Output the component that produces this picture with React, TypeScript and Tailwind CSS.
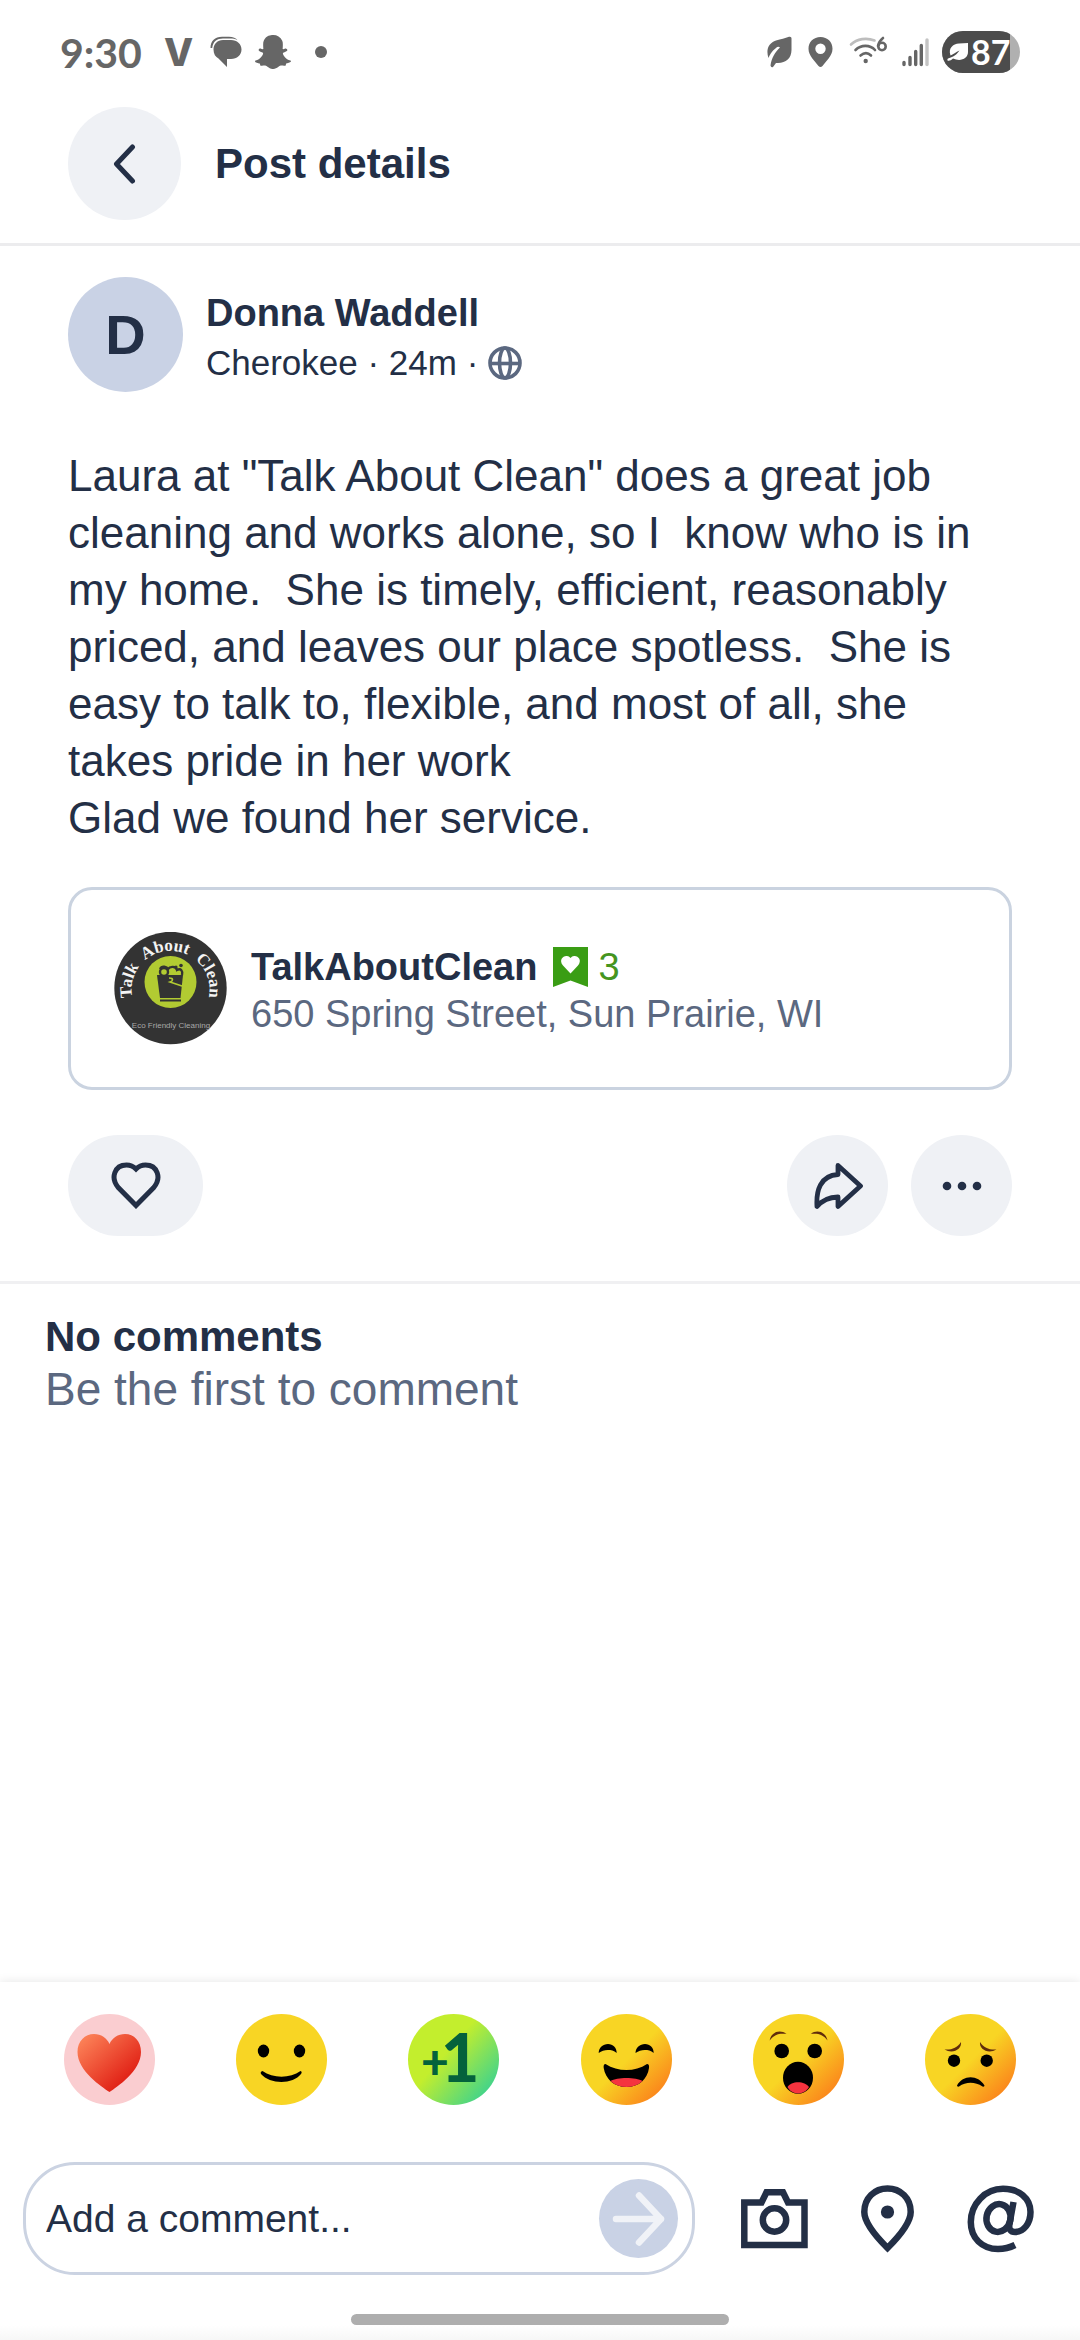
import type { ReactNode } from "react";
import { FaSnapchatGhost } from "react-icons/fa";

const face = "h-[91px] w-[91px]";

function StatusBar() {
  return (
    <div className="flex h-[104px] items-center justify-between px-[60px] text-[#666666]">
      <div className="flex items-center">
        <span className="font-['Lato',sans-serif] text-[41px] font-bold leading-none">9:30</span>
        <span className="ml-[22px] font-['Inter',sans-serif] text-[38px] font-extrabold leading-none">V</span>
        <svg viewBox="0 0 32 32" className="ml-[17px] h-8 w-8" aria-hidden="true">
          <path d="M.5 12C.5 5 5 .8 12 .8H19C23 .8 26 2 27.500 4.200C25 3 23 2.600 20 2.600H13C7 2.600 3 5.500 2.200 12Z" fill="currentColor" />
          <path d="M13 4H21C27 4 31.500 8 31.500 13.500S27 23 21 23H17V31L8.500 22.500C5.500 21 3.500 18 3.500 13.500C3.500 8 7.500 4 13 4Z" fill="currentColor" />
        </svg>
        <FaSnapchatGhost className="ml-[13px] h-[36px] w-[36px]" aria-hidden="true" />
        <span className="ml-6 h-3 w-3 rounded-full bg-[#666666]" />
      </div>
      <div className="flex items-center">
        <svg viewBox="0 0 25 32" className="h-8 w-[25px]" aria-hidden="true">
          <path d="M22 .8C23.500 .3 24.500 1 24.500 2.500V14C24.500 22 19 27 11 27H9L6 31Q4 32 3.500 29.500C4.500 22 8 16 13 11.500Q11 10 9 12C4.500 15.500 2.500 19 1.500 22C-1.500 13 2 7 9 4.500C14 3 18 2.500 22 .8Z" fill="currentColor" />
        </svg>
        <svg viewBox="0 0 25 32" className="ml-4 h-8 w-[25px]" aria-hidden="true">
          <path fillRule="evenodd" d="M12.500 1C5.500 1 .5 6 .5 12.700C.5 20 7 25 10.500 30Q12.500 32 14.500 30C18 25 24.500 20 24.500 12.700C24.500 6 19.500 1 12.500 1ZM12.500 7.500A5.200 5.200 0 1 1 12.500 17.900A5.200 5.200 0 1 1 12.500 7.500Z" fill="currentColor" />
        </svg>
        <svg viewBox="0 0 38 32" className="ml-4 h-8 w-[38px]" aria-hidden="true">
          <g fill="none" strokeWidth="2.600" strokeLinecap="round">
            <path d="M2 8.500C8 2.500 18 1.500 25.500 4.500" stroke="#bdbdbd" />
            <path d="M6.500 14C12 8.500 21 8.500 26 14" stroke="currentColor" />
            <path d="M11.500 19.500C15 16.500 19 16.500 22 19.500" stroke="currentColor" />
            <path d="M34 2C31.500 4 29.500 7 29 10" stroke="currentColor" />
            <circle cx="33" cy="10.500" r="3.700" stroke="currentColor" />
          </g>
          <circle cx="16.700" cy="25" r="2.200" fill="currentColor" />
        </svg>
        <svg viewBox="0 0 28 32" className="ml-[14px] h-8 w-7" aria-hidden="true">
          <g stroke="currentColor" strokeWidth="3.400" strokeLinecap="round">
            <path d="M3 26.500V28.500M9 21.500V28.500M14.700 15.500V28.500M20.300 9.500V28.500" />
            <path d="M26 4V28.500" stroke="#c4c4c4" />
          </g>
        </svg>
        <div className="ml-[13px] flex h-[42px] w-[78px] overflow-hidden rounded-full bg-[#b0b0b0]">
          <div className="flex w-[68px] items-center bg-[#4c4c4c] pl-[5px] text-white">
            <svg viewBox="0 0 22 20" className="h-5 w-[22px] shrink-0" aria-hidden="true">
              <path d="M21 1V10C21 16 15 19 9 17.500L6 16.500C4 18.500 2 19 .5 18.500Q0 17 1 16.500C7 15 10 12 12.500 8.500C9 10 6 12.500 3.500 13.500C1 6 6 2 12 1.500C15 1.200 18 1 21 1Z" fill="currentColor" />
            </svg>
            <span className="ml-[2px] font-['Lato',sans-serif] text-[34px] font-bold leading-none">87</span>
          </div>
        </div>
      </div>
    </div>
  );
}

function BusinessLogo() {
  return (
    <svg viewBox="0 0 113 113" className="h-[113px] w-[113px] shrink-0" role="img" aria-label="Talk About Clean, Eco Friendly Cleaning">
      <defs>
        <path id="logo-arc" d="M21 74A39 39 0 1 1 92 74" />
      </defs>
      <circle cx="56.500" cy="56" r="56.200" fill="#333333" />
      <text fill="#f4f4f4" fontFamily="Liberation Serif, serif" fontSize="17" fontWeight="bold">
        <textPath href="#logo-arc" startOffset="50%" textAnchor="middle">
          {"Talk\u00a0\u00a0About\u00a0\u00a0Clean"}
        </textPath>
      </text>
      <circle cx="56.500" cy="50" r="26" fill="#b2cb32" />
      <path d="M43 43H69L66.500 66H46Z" fill="#333333" />
      <path d="M46 68.500H67" stroke="#333333" strokeWidth="2" />
      <g fill="none" stroke="#333333" strokeWidth="2.400">
        <circle cx="50" cy="40" r="4" />
        <path d="M46 37C48 33 53 35 54 37C56 34 62 34 63 38C67 36 69 39 68 43" />
      </g>
      <path d="M55 46C60 46 59 49 56 50L71 55" fill="none" stroke="#b2cb32" strokeWidth="1.600" />
      <circle cx="62" cy="35" r="1.600" fill="#333333" />
      <circle cx="67" cy="33.500" r="1.800" fill="#333333" />
      <text x="57" y="96" textAnchor="middle" fill="#a8a8a8" fontFamily="Liberation Sans, sans-serif" fontSize="8">Eco Friendly Cleaning</text>
    </svg>
  );
}

function FaceBase({ id }: { id: string }) {
  return (
    <>
      <defs>
        <linearGradient id={id} x1="0.200" y1="0.200" x2="0.880" y2="0.880">
          <stop offset="0.450" stopColor="#f8d524" />
          <stop offset="1" stopColor="#fb831b" />
        </linearGradient>
      </defs>
      <circle cx="45.500" cy="45.500" r="45.500" fill={`url(#${id})`} />
    </>
  );
}

const reactions: { label: string; art: ReactNode }[] = [
  {
    label: "Love",
    art: (
      <svg viewBox="0 0 91 91" className={face} aria-hidden="true">
        <defs>
          <linearGradient id="love" x1="0.050" y1="0.150" x2="0.750" y2="0.850">
            <stop offset="0" stopColor="#fb7e55" />
            <stop offset="1" stopColor="#e01f14" />
          </linearGradient>
        </defs>
        <circle cx="45.500" cy="45.500" r="45.500" fill="#facdd0" />
        <path d="M45.500 78C38 73 13.500 57 13.500 38C13.500 27 21 20 30 20C37 20 43 24 45.500 30C48 24 54 20 61 20C70 20 77 27 77 38C77 57 53 73 45.500 78Z" fill="url(#love)" />
      </svg>
    ),
  },
  {
    label: "Smile",
    art: (
      <svg viewBox="0 0 91 91" className={face} aria-hidden="true">
        <circle cx="45.500" cy="45.500" r="45.500" fill="#f8d524" />
        <ellipse cx="27.500" cy="37" rx="5.700" ry="6.400" />
        <ellipse cx="63.500" cy="37" rx="5.700" ry="6.400" />
        <path d="M26.500 57C37 64.500 54 64.500 64.500 57Q66.500 57.500 65 60C57 70.500 34 70.500 25 60Q24 57.500 26.500 57Z" />
      </svg>
    ),
  },
  {
    label: "Plus one",
    art: (
      <svg viewBox="0 0 91 91" className={face} aria-hidden="true">
        <defs>
          <linearGradient id="plus" x1="0.150" y1="0.200" x2="0.900" y2="0.850">
            <stop offset="0.350" stopColor="#c3ee2d" />
            <stop offset="1" stopColor="#3fd38c" />
          </linearGradient>
        </defs>
        <circle cx="45.500" cy="45.500" r="45.500" fill="url(#plus)" />
        <text x="13" y="65" fill="#04623c" fontFamily="Lato, sans-serif" fontWeight="900" fontSize="48">
          +
          <tspan x="33" y="68" fontSize="66">1</tspan>
        </text>
      </svg>
    ),
  },
  {
    label: "Laugh",
    art: (
      <svg viewBox="0 0 91 91" className={face} aria-hidden="true">
        <FaceBase id="laugh" />
        <path d="M17.700 39C17.700 33.500 22 30 27 30S35.700 33.500 35.700 39C33 36.500 30 36 26.700 36S20.500 37 17.700 39Z" />
        <path d="M54.500 39C54.500 33.500 59 30 64 30S72.700 33.500 72.700 39C70 36.500 67 36 63.700 36S57.500 37 54.500 39Z" />
        <path d="M24.500 50C37 58 54 58 66 50Q68.500 50 68 54C66.500 65 58 73 45.500 73S24.500 65 22.700 54Q22.200 50 24.500 50Z" />
        <path d="M29.500 67C36 63 55 63 61.500 67C53 75 38 75 29.500 67Z" fill="#f5333f" />
      </svg>
    ),
  },
  {
    label: "Surprised",
    art: (
      <svg viewBox="0 0 91 91" className={face} aria-hidden="true">
        <FaceBase id="wow" />
        <path d="M16.700 26.500C18 18 27 15 33.500 20C27 19 21.500 20 16.700 26.500Z" fill="#602d0b" />
        <path d="M74.500 26.500C73 18 64 15 57.700 20C64 19 70 20 74.500 26.500Z" fill="#602d0b" />
        <circle cx="28.700" cy="37" r="7.300" />
        <circle cx="61.700" cy="37" r="7.300" />
        <ellipse cx="45" cy="63.700" rx="15" ry="16" />
        <path d="M34.500 73C38 66.500 52 66.500 56 73C51 81.500 39 81.500 34.500 73Z" fill="#f5333f" />
      </svg>
    ),
  },
  {
    label: "Sad",
    art: (
      <svg viewBox="0 0 91 91" className={face} aria-hidden="true">
        <FaceBase id="sad" />
        <path d="M19.500 35.500C27 36 32 34 36 28C37 35 28 40.500 19.500 35.500Z" fill="#602d0b" />
        <path d="M71.500 35.500C64 36 59 34 55 28C54 35 63 40.500 71.500 35.500Z" fill="#602d0b" />
        <circle cx="29" cy="46.700" r="6.200" />
        <circle cx="61.700" cy="46.700" r="6.200" />
        <path d="M32 71.500C38 60.500 53 60.500 59.500 71.500Q59.500 73 57.500 72.500C50 67.500 41 67.500 34 72.500Q32 73 32 71.500Z" />
      </svg>
    ),
  },
];

export default function App() {
  return (
    <div className="flex min-h-screen flex-col bg-white font-['Liberation_Sans',Arial,sans-serif] text-[#232f46]">
      <StatusBar />

      <header className="flex items-center gap-[34px] border-b-[3px] border-[#ececee] px-[68px] pb-[23px] pt-[3px]">
        <button type="button" aria-label="Back" className="flex h-[113px] w-[113px] items-center justify-center rounded-full bg-[#eff1f5]">
          <svg viewBox="0 0 24 40" className="h-10 w-6" fill="none" stroke="currentColor" strokeWidth="5" strokeLinecap="round" strokeLinejoin="round" aria-hidden="true">
            <path d="M19.500 3L3.500 20L19.500 37" />
          </svg>
        </button>
        <h1 className="text-[42px] font-bold leading-[53px]">Post details</h1>
      </header>

      <main>
        <article className="border-b-[3px] border-[#f0f0f2] px-[68px] pb-[45px] pt-[31px]">
          <div className="flex items-start gap-[23px]">
            <div className="flex h-[115px] w-[115px] items-center justify-center rounded-full bg-[#c9d2e5] text-[56px] font-bold leading-none">D</div>
            <div className="pt-[11px]">
              <h2 className="text-[38px] font-bold leading-[50px]">Donna Waddell</h2>
              <p className="flex items-center gap-[10px] text-[35px] leading-[50px]">
                Cherokee · 24m ·
                <svg viewBox="0 0 34 34" className="h-[34px] w-[34px]" fill="none" stroke="#5b6880" strokeWidth="3.600" aria-label="Public" role="img">
                  <circle cx="17" cy="17" r="15" />
                  <ellipse cx="17" cy="17" rx="5.500" ry="15" />
                  <path d="M2 17.500H32" />
                </svg>
              </p>
            </div>
          </div>

          <p className="mt-[55px] whitespace-pre-wrap text-[44px] leading-[57px]">
            {`Laura at "Talk About Clean" does a great job cleaning and works alone, so I  know who is in my home.  She is timely, efficient, reasonably priced, and leaves our place spotless.  She is easy to talk to, flexible, and most of all, she takes pride in her work\nGlad we found her service.`}
          </p>

          <a href="#business" className="mt-[41px] flex items-center gap-6 rounded-[24px] border-[3px] border-[#cad3e0] px-[43px] py-[42px]">
            <BusinessLogo />
            <div className="pt-1">
              <div className="flex items-center text-[38px] leading-[47px]">
                <span className="font-bold">TalkAboutClean</span>
                <svg viewBox="0 0 35 40" className="ml-4 h-10 w-[35px]" aria-hidden="true">
                  <path d="M0 0H35V40L17.500 33.500L0 40Z" fill="#3a9d14" />
                  <path d="M17.500 26.500L10 18.500C5.500 13 10 8.500 14 9Q16 9.200 17.500 11Q19 9.200 21 9C25 8.500 29.500 13 25 18.500Z" fill="#ffffff" />
                </svg>
                <span className="ml-[10px] text-[#45951f]">3</span>
              </div>
              <p className="text-[38px] leading-[47px] text-[#5b6880]">650 Spring Street, Sun Prairie, WI</p>
            </div>
          </a>

          <div className="mt-[45px] flex items-center gap-[23px]">
            <button type="button" aria-label="Like" className="mr-auto flex h-[101px] w-[135px] items-center justify-center rounded-full bg-[#eff1f5]">
              <svg viewBox="0 0 50 47" className="h-[47px] w-[50px]" fill="none" stroke="currentColor" strokeWidth="5" aria-hidden="true">
                <path d="M25 43.500L7.500 25.800C-1 16 3.500 3 15.500 3Q21 3 25 7Q29 3 34.500 3C46.500 3 51 16 42.500 25.800Z" />
              </svg>
            </button>
            <button type="button" aria-label="Share" className="flex h-[101px] w-[101px] items-center justify-center rounded-full bg-[#eff1f5]">
              <svg viewBox="0 0 50 48" className="h-12 w-[50px]" fill="none" stroke="currentColor" strokeWidth="4.800" strokeLinejoin="round" aria-hidden="true">
                <path d="M25 3.500L47.500 24L25 44.500V35C16 35.300 9 38.500 4 44.500C3 29 7 13.500 25 12.500Z" />
              </svg>
            </button>
            <button type="button" aria-label="More options" className="flex h-[101px] w-[101px] items-center justify-center rounded-full bg-[#eff1f5]">
              <svg viewBox="0 0 40 10" className="h-[10px] w-10" fill="currentColor" aria-hidden="true">
                <circle cx="5" cy="5" r="4.300" />
                <circle cx="20" cy="5" r="4.300" />
                <circle cx="35" cy="5" r="4.300" />
              </svg>
            </button>
          </div>
        </article>

        <section className="px-[45px] pt-[26px]">
          <h2 className="text-[42px] font-bold leading-[53px]">No comments</h2>
          <p className="text-[46px] leading-[53px] text-[#5b6880]">Be the first to comment</p>
        </section>
      </main>

      <footer className="mt-auto bg-white pt-8 shadow-[0_0_10px_rgba(0,0,0,0.1)]">
        <div className="flex justify-between px-16">
          {reactions.map((r) => (
            <button key={r.label} type="button" aria-label={r.label} className="rounded-full">
              {r.art}
            </button>
          ))}
        </div>

        <form className="mt-[57px] flex items-center gap-[53px] pl-[23px] pr-[46px]" onSubmit={(e) => e.preventDefault()}>
          <div className="-mr-[7px] flex h-[113px] min-w-0 flex-1 items-center rounded-[52px] border-[3px] border-[#cbd3e2] pl-5 pr-[14px]">
            <input
              type="text"
              aria-label="Add a comment"
              placeholder="Add a comment..."
              className="min-w-0 flex-1 bg-transparent text-[39px] leading-[53px] outline-none placeholder:text-[#232f46] placeholder:opacity-100"
            />
            <button type="submit" aria-label="Send" className="flex h-[79px] w-[79px] shrink-0 items-center justify-center rounded-full bg-[#c9d2e5]">
              <svg viewBox="0 0 54 54" className="h-[54px] w-[54px]" fill="none" stroke="#f0f2f7" strokeWidth="6.500" strokeLinecap="round" strokeLinejoin="round" aria-hidden="true">
                <path d="M4 27H49M27 3.500L49 27L27 50.500" />
              </svg>
            </button>
          </div>
          <button type="button" aria-label="Add photo">
            <svg viewBox="0 0 67 62" className="h-[62px] w-[67px]" fill="none" stroke="currentColor" strokeWidth="6.500" aria-hidden="true">
              <path d="M3.300 14.500H20.500L25.500 4.300H42L47 14.500H63.500V57H3.300Z" />
              <circle cx="33.500" cy="32" r="11.700" />
            </svg>
          </button>
          <button type="button" aria-label="Add location">
            <svg viewBox="0 0 53 68" className="h-[68px] w-[53px]" fill="none" stroke="currentColor" strokeWidth="6.500" aria-hidden="true">
              <path d="M26.500 63C16 52.500 3.300 38.500 3.300 27C3.300 13 13.500 3.500 26.500 3.500S49.700 13 49.700 27C49.700 38.500 37 52.500 26.500 63Z" />
              <circle cx="26.500" cy="27" r="6.600" fill="currentColor" stroke="none" />
            </svg>
          </button>
          <button type="button" aria-label="Mention someone">
            <svg viewBox="0 0 67 68" className="h-[68px] w-[67px]" fill="none" stroke="currentColor" strokeWidth="6.500" aria-hidden="true">
              <path d="M46.500 17L42.500 39C41.500 44 43.500 47 48 47C57 47 63.500 38 63.500 27C63.500 13 52 3.800 36 3.800C18 3.800 3.800 19 3.800 37C3.800 53 15 64 31 64Q40 64 48 60" />
              <ellipse cx="31.500" cy="33" rx="12" ry="14" transform="rotate(12 31.500 33)" />
            </svg>
          </button>
        </form>

        <div className="mt-[27px] bg-linear-to-b from-white from-60% to-[#f7f7f7] pb-[15px] pt-3">
          <div className="mx-auto h-[11px] w-[35%] rounded-full bg-[#aeaeae]" />
        </div>
      </footer>
    </div>
  );
}
